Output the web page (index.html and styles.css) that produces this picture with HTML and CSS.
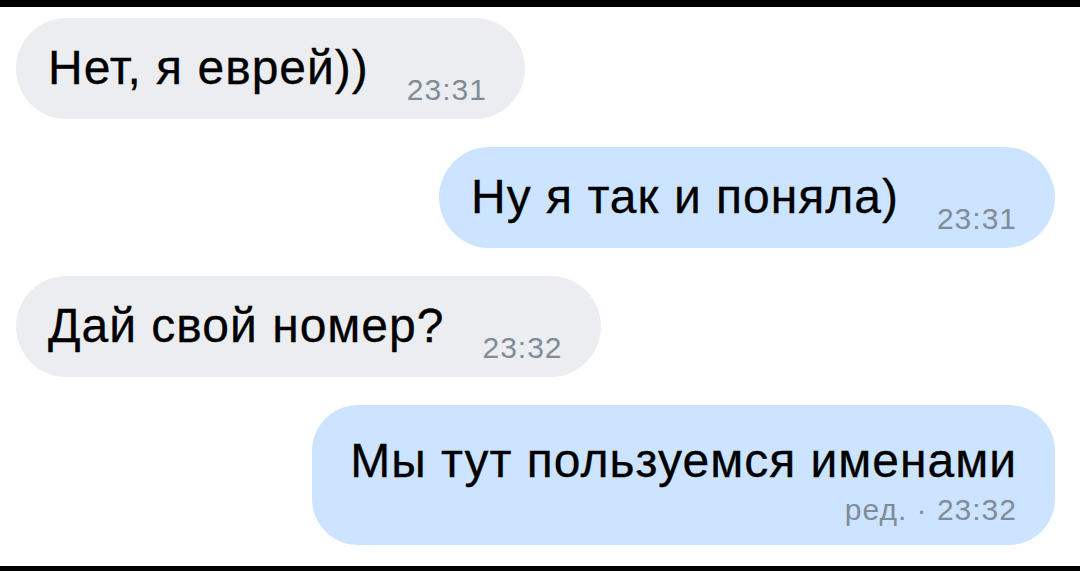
FILE: index.html
```html
<!DOCTYPE html>
<html lang="ru">
<head>
  <meta charset="UTF-8" />
  <meta name="viewport" content="width=device-width, initial-scale=1.0"/>
  <title>Чат</title>
  <link rel="stylesheet" href="styles.css">
</head>
<body>

<div class="chat">
  <div class="msg in">
    <span class="text">Нет, я еврей))</span>
    <span class="time">23:31</span>
  </div>
  <div class="msg out">
    <span class="text">Ну я так и поняла)</span>
    <span class="time">23:31</span>
  </div>
  <div class="msg in">
    <span class="text">Дай свой номер?</span>
    <span class="time">23:32</span>
  </div>
  <div class="msg out edited">
    <span class="text">Мы тут пользуемся именами</span>
    <span class="time">ред. · 23:32</span>
  </div>
</div>

</body>
</html>
```

FILE: styles.css
```css
html, body {
  height: 100%;
}

body {
  margin: 0;
  box-sizing: border-box;
  background: #fff;
  border-top: 7px solid #000;
  border-bottom: 5px solid #000;
  font-family: 'Liberation Sans', Arial, sans-serif;
  color: #000;
}

.chat {
  display: flex;
  flex-direction: column;
  gap: 28px;
  padding: 11px 25px 0 16px;
}

.msg {
  display: flex;
  box-sizing: border-box;
  height: 101px;
  padding: 0 38px 14px 32px;
  gap: 38px;
  border-radius: 51px;
}

.in {
  align-self: flex-start;
  background: #ebedf0;
}

.out {
  align-self: flex-end;
  background: #cce4ff;
}

.text {
  align-self: center;
  margin-top: 12px;
  font-size: 48px;
  line-height: 52px;
  letter-spacing: 1px;
  -webkit-text-stroke: 0.3px #000;
}

.time {
  align-self: flex-end;
  font-size: 30px;
  line-height: 30px;
  letter-spacing: 1px;
  color: #818c99;
}

.edited {
  flex-direction: column;
  align-items: flex-end;
  gap: 0;
  height: 140px;
  padding: 0 38px 12px 38px;
  border-radius: 46px;
}

.edited .text {
  align-self: flex-start;
  margin-top: 30px;
}

.edited .time {
  margin-top: 8px;
}
```
